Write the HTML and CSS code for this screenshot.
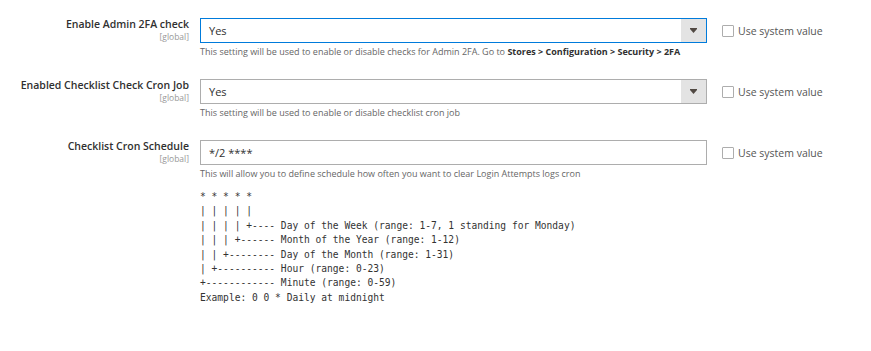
FILE: index.html
```html
<!DOCTYPE html>
<html lang="en">
<head>
  <meta charset="UTF-8">
  <title>Two-Factor Auth Settings</title>
  <link rel="stylesheet" href="styles.css">
</head>
<body>
  <div class="config">

    <div class="row">
      <div class="label">
        <span class="title">Enable Admin 2FA check</span>
        <span class="scope">[global]</span>
      </div>
      <div class="field">
        <div class="select focused">
          <span class="value">Yes</span>
          <span class="trigger">
            <svg width="7" height="5" viewBox="0 0 7 5"><path d="M0 0H7V1L3.5 5L0 1Z" fill="#514943"/></svg>
          </span>
        </div>
        <p class="note">This setting will be used to enable or disable checks for Admin 2FA. Go to <b>Stores &gt; Configuration &gt; Security &gt; 2FA</b></p>
      </div>
      <label class="system">
        <span class="box"></span>
        Use system value
      </label>
    </div>

    <div class="row">
      <div class="label">
        <span class="title">Enabled Checklist Check Cron Job</span>
        <span class="scope">[global]</span>
      </div>
      <div class="field">
        <div class="select">
          <span class="value">Yes</span>
          <span class="trigger">
            <svg width="7" height="5" viewBox="0 0 7 5"><path d="M0 0H7V1L3.5 5L0 1Z" fill="#514943"/></svg>
          </span>
        </div>
        <p class="note">This setting will be used to enable or disable checklist cron job</p>
      </div>
      <label class="system">
        <span class="box"></span>
        Use system value
      </label>
    </div>

    <div class="row">
      <div class="label">
        <span class="title">Checklist Cron Schedule</span>
        <span class="scope">[global]</span>
      </div>
      <div class="field">
        <div class="input">*/2 ****</div>
        <p class="note">This will allow you to define schedule how often you want to clear Login Attempts logs cron</p>
<pre class="cron">* * * * *
| | | | |
| | | | +---- Day of the Week (range: 1-7, 1 standing for Monday)
| | | +------ Month of the Year (range: 1-12)
| | +-------- Day of the Month (range: 1-31)
| +---------- Hour (range: 0-23)
+------------ Minute (range: 0-59)
Example: 0 0 * Daily at midnight</pre>
      </div>
      <label class="system">
        <span class="box"></span>
        Use system value
      </label>
    </div>

  </div>
</body>
</html>
```

FILE: styles.css
```css
body {
  margin: 0;
  background: #fff;
  font-family: 'Open Sans', sans-serif;
  color: #303030;
}

.config {
  padding-top: 18px;
}

.row {
  display: flex;
  align-items: flex-start;
  margin-bottom: 20px;
}

.label {
  width: 189px;
  display: flex;
  flex-direction: column;
  align-items: flex-end;
  text-align: right;
}

.label .title {
  font-size: 10.5px;
  font-weight: 600;
  line-height: 13px;
  color: #303030;
}

.label .scope {
  font-size: 8.5px;
  line-height: 11px;
  color: #999;
}

.field {
  width: 507px;
  margin-left: 11px;
}

.select,
.input {
  box-sizing: border-box;
  height: 25px;
  border: 1px solid #adadad;
  background: #fff;
  font-size: 11px;
  color: #303030;
}

.select {
  display: flex;
  align-items: stretch;
}

.select.focused {
  border-color: #007bdb;
}

.select .value {
  flex: 1;
  display: flex;
  align-items: center;
  padding-left: 8px;
}

.select .trigger {
  width: 25px;
  background: #e3e3e3;
  display: flex;
  align-items: center;
  justify-content: center;
}

.input {
  display: flex;
  align-items: center;
  padding-left: 8px;
}

.note {
  margin: 2px 0 0;
  font-size: 9px;
  line-height: 14px;
  color: #666;
}

.note b {
  font-weight: 700;
  color: #303030;
}

.cron {
  margin: 9px 0 0;
  font-family: 'DejaVu Sans Mono', monospace;
  font-size: 9.6px;
  line-height: 14.4px;
  color: #333;
}

.system {
  margin-left: 15px;
  height: 25px;
  display: flex;
  align-items: center;
  gap: 4px;
  font-size: 10.5px;
  color: #555;
}

.system .box {
  box-sizing: border-box;
  width: 12px;
  height: 12px;
  border: 1px solid #adadad;
  border-radius: 1px;
  background: #fff;
}
```
